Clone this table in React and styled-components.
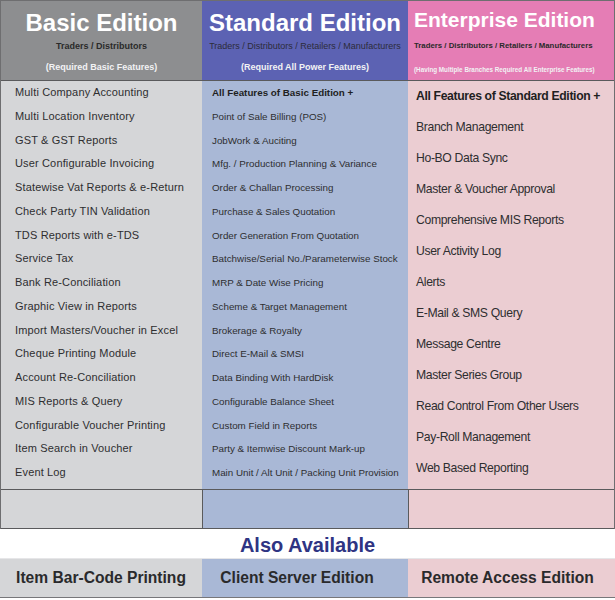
import React from 'react';
import styled, { createGlobalStyle } from 'styled-components';

const GlobalStyle = createGlobalStyle`
  body {
    margin: 0;
    background: #fff;
    font-family: "Liberation Sans", Arial, sans-serif;
  }
`;

const tones = {
  gray: { head: '#8d8e90', body: '#d5d6d8' },
  blue: { head: '#5c62b3', body: '#a9b8d6' },
  pink: { head: '#e57db5', body: '#ebcdd2' },
};

const editions = [
  {
    tone: 'gray',
    title: 'Basic Edition',
    titleSize: 24,
    padTop: 10,
    align: 'center',
    sub: 'Traders / Distributors',
    subStyle: 'basic',
    paren: '(Required Basic Features)',
    parenSize: 9,
    list: { size: 11, row: 23.75, pad: 14, spacing: 0.15 },
    features: [
      'Multi Company Accounting',
      'Multi Location Inventory',
      'GST & GST Reports',
      'User Configurable Invoicing',
      'Statewise Vat Reports & e-Return',
      'Check Party TIN Validation',
      'TDS Reports with e-TDS',
      'Service Tax',
      'Bank Re-Conciliation',
      'Graphic View in Reports',
      'Import Masters/Voucher in Excel',
      'Cheque Printing Module',
      'Account Re-Conciliation',
      'MIS Reports & Query',
      'Configurable Voucher Printing',
      'Item Search in Voucher',
      'Event Log',
    ],
  },
  {
    tone: 'blue',
    title: 'Standard Edition',
    titleSize: 24,
    padTop: 10,
    align: 'center',
    sub: 'Traders / Distributors / Retailers / Manufacturers',
    subStyle: 'standard',
    paren: '(Required All Power Features)',
    parenSize: 9,
    list: { size: 9.8, row: 23.75, pad: 10, spacing: 0 },
    features: [
      'All Features of Basic Edition +',
      'Point of Sale Billing (POS)',
      'JobWork & Auciting',
      'Mfg. / Production  Planning & Variance',
      'Order & Challan Processing',
      'Purchase & Sales Quotation',
      'Order Generation From Quotation',
      'Batchwise/Serial No./Parameterwise Stock',
      'MRP & Date Wise Pricing',
      'Scheme & Target Management',
      'Brokerage  & Royalty',
      'Direct E-Mail & SMSI',
      'Data Binding With HardDisk',
      'Configurable Balance Sheet',
      'Custom Field in Reports',
      'Party & Itemwise Discount Mark-up',
      'Main Unit / Alt Unit / Packing Unit Provision',
    ],
  },
  {
    tone: 'pink',
    title: 'Enterprise Edition',
    titleSize: 21,
    padTop: 8,
    align: 'left',
    sub: 'Traders / Distributors / Retailers / Manufacturers',
    subStyle: 'enterprise',
    paren: '(Having Multiple Branches Required All Enterprise Features)',
    parenSize: 6.3,
    list: { size: 12.2, row: 31, pad: 8, spacing: -0.35 },
    features: [
      'All Features of Standard Edition +',
      'Branch Management',
      'Ho-BO Data Sync',
      'Master & Voucher Approval',
      'Comprehensive MIS Reports',
      'User Activity Log',
      'Alerts',
      'E-Mail & SMS Query',
      'Message Centre',
      'Master Series Group',
      'Read Control From Other Users',
      'Pay-Roll Management',
      'Web Based Reporting',
    ],
  },
];

const addOns = [
  { tone: 'gray', label: 'Item Bar-Code Printing', shift: 0 },
  { tone: 'blue', label: 'Client Server Edition', shift: -8 },
  { tone: 'pink', label: 'Remote Access Edition', shift: -4 },
];

export default function App() {
  return (
    <Page>
      <GlobalStyle />
      <Table>
        {editions.map(ed => (
          <HeaderCell key={ed.title} $tone={ed.tone} $padTop={ed.padTop} $align={ed.align}>
            <Title $size={ed.titleSize}>{ed.title}</Title>
            <Sub $variant={ed.subStyle}>{ed.sub}</Sub>
            <Paren $variant={ed.subStyle} $size={ed.parenSize}>{ed.paren}</Paren>
          </HeaderCell>
        ))}
        {editions.map(ed => (
          <FeatureList
            key={ed.title + '-list'}
            $tone={ed.tone}
            $size={ed.list.size}
            $row={ed.list.row}
            $pad={ed.list.pad}
            $spacing={ed.list.spacing}
          >
            {ed.features.map((f, idx) => (
              <Feature key={f} $bold={idx === 0 && ed.tone !== 'gray'}>{f}</Feature>
            ))}
          </FeatureList>
        ))}
        {editions.map((ed, idx) => (
          <BlankCell key={ed.title + '-blank'} $tone={ed.tone} $first={idx === 0} />
        ))}
      </Table>
      <AlsoBand>Also Available</AlsoBand>
      <AddOnRow>
        {addOns.map(a => (
          <AddOn key={a.label} $tone={a.tone} $shift={a.shift}>{a.label}</AddOn>
        ))}
      </AddOnRow>
    </Page>
  );
}

const Page = styled.div`
  width: 615px;
  height: 600px;
  background: #fff;
`;

const Table = styled.div`
  display: grid;
  grid-template-columns: 201px 206px 206px;
  border: 1px solid #6e6e70;
  border-bottom: none;
`;

const HeaderCell = styled.div`
  height: 80px;
  box-sizing: border-box;
  padding-top: ${p => p.$padTop}px;
  padding-left: ${p => (p.$align === 'left' ? 6 : 0)}px;
  background: ${p => tones[p.$tone].head};
  border-bottom: 1px solid #5a5a5c;
  display: flex;
  flex-direction: column;
  align-items: ${p => (p.$align === 'left' ? 'flex-start' : 'center')};
  white-space: nowrap;
`;

const Title = styled.div`
  font-size: ${p => p.$size}px;
  line-height: ${p => p.$size}px;
  font-weight: bold;
  color: #fff;
`;

const Sub = styled.div`
  margin-top: ${p => (p.$variant === 'enterprise' ? 7 : 2)}px;
  line-height: 18px;
  font-size: ${p => (p.$variant === 'enterprise' ? 7.8 : 9)}px;
  font-weight: ${p => (p.$variant === 'standard' ? 'normal' : 'bold')};
  color: ${p => (p.$variant === 'standard' ? '#2c2c3a' : '#2a2a2a')};
`;

const Paren = styled.div`
  margin-top: ${p => (p.$variant === 'enterprise' ? 6 : 3)}px;
  line-height: 18px;
  font-size: ${p => p.$size}px;
  font-weight: bold;
  color: #f2f2f4;
`;

const FeatureList = styled.div`
  height: 408px;
  box-sizing: border-box;
  background: ${p => tones[p.$tone].body};
  padding-left: ${p => p.$pad}px;
  font-size: ${p => p.$size}px;
  line-height: ${p => p.$row}px;
  letter-spacing: ${p => p.$spacing}px;
  color: #2e2e30;
  white-space: nowrap;
  overflow: hidden;
`;

const Feature = styled.div`
  font-weight: ${p => (p.$bold ? 'bold' : 'normal')};
  color: ${p => (p.$bold ? '#1f1f22' : 'inherit')};
`;

const BlankCell = styled.div`
  height: 38px;
  background: ${p => tones[p.$tone].body};
  border-top: 1px solid #5a5a5c;
  border-bottom: 1px solid #5a5a5c;
  border-left: ${p => (p.$first ? 'none' : '1px solid #5a5a5c')};
`;

const AlsoBand = styled.div`
  height: 29px;
  line-height: 32px;
  text-align: center;
  font-size: 20px;
  font-weight: bold;
  color: #2f3483;
`;

const AddOnRow = styled.div`
  display: grid;
  grid-template-columns: 202px 206px 207px;
  border-top: 1px solid #e6e6e8;
  border-bottom: 1px solid #77777a;
`;

const AddOn = styled.div`
  height: 38px;
  display: flex;
  align-items: center;
  justify-content: center;
  padding-right: ${p => -p.$shift * 2}px;
  background: ${p => tones[p.$tone].body};
  font-size: 15.6px;
  font-weight: bold;
  color: #2a2a2c;
  white-space: nowrap;
`;
